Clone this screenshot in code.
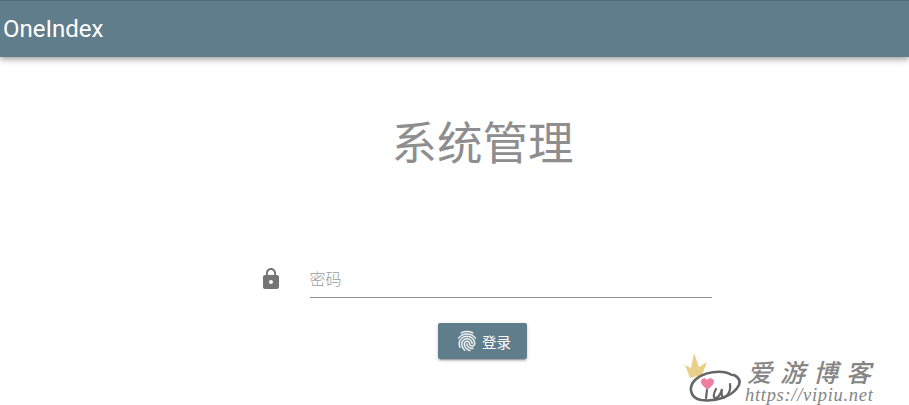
<style>
  :global(body) { margin: 0; background: #fff; overflow: hidden; }
  .page { position: relative; width: 909px; height: 405px; overflow: hidden; font-family: Roboto, "Noto Sans CJK SC", sans-serif; }
  .bar { height: 57px; background: #607d8b; border-top: 1px solid #526c79; box-sizing: border-box; display: flex; align-items: center; padding: 0 3px; color: #fff; font-size: 24px; box-shadow: 0 2px 4px -1px rgba(0,0,0,.2), 0 4px 5px 0 rgba(0,0,0,.14), 0 1px 10px 0 rgba(0,0,0,.12); }
  main { padding-left: 56px; display: flex; flex-direction: column; align-items: center; }
  h1 { margin: 51px 0 0; font-weight: 400; font-size: 45.5px; line-height: 64px; color: #8e8e8e; text-align: center; font-family: "Noto Sans CJK SC", sans-serif; }
  .field { width: 453px; margin: 89px 0 0 5px; display: flex; align-items: flex-end; gap: 27px; }
  .field svg { flex: none; margin-bottom: 7px; }
  .input { flex: 1; height: 37px; box-sizing: border-box; border-bottom: 1px solid #8f8f8f; color: #9c9c9c; font-size: 16px; line-height: 34px; font-family: "Noto Sans CJK SC", sans-serif; font-weight: 300; }
  button { margin-top: 25px; width: 89px; height: 36px; padding: 0 0 0 1px; border: 0; border-radius: 2px; background: #607d8b; color: #fff; font-size: 14.5px; font-family: "Noto Sans CJK SC", sans-serif; display: flex; align-items: center; justify-content: center; gap: 3px; box-shadow: 0 3px 1px -2px rgba(0,0,0,.2), 0 2px 2px 0 rgba(0,0,0,.14), 0 1px 5px 0 rgba(0,0,0,.12); }
  button svg { stroke: #fff; stroke-width: 0.4; }
  .mark { position: absolute; left: 684px; top: 354px; width: 225px; height: 51px; }
  .mark svg { position: absolute; left: 0; top: 0; overflow: visible; }
  .cn { position: absolute; left: 63px; top: 4px; font-family: "Noto Sans CJK SC", sans-serif; font-size: 25px; font-weight: 500; line-height: 26px; letter-spacing: 8px; color: #858585; white-space: nowrap; font-style: italic; }
  .url { position: absolute; left: 61px; top: 31px; font-family: "Liberation Serif", serif; font-style: italic; font-size: 18.5px; line-height: 20px; letter-spacing: 0.7px; color: #858585; white-space: nowrap; }
</style>

<div class="page">
  <header class="bar">OneIndex</header>
  <main>
    <h1>系统管理</h1>
    <div class="field">
      <svg width="24" height="24" viewBox="0 0 24 24" fill="#757575"><path d="M18 8h-1V6c0-2.76-2.24-5-5-5S7 3.24 7 6v2H6c-1.1 0-2 .9-2 2v10c0 1.1.9 2 2 2h12c1.1 0 2-.9 2-2V10c0-1.1-.9-2-2-2zm-6 9c-1.1 0-2-.9-2-2s.9-2 2-2 2 .9 2 2-.9 2-2 2zm3.1-9H8.9V6c0-1.71 1.39-3.1 3.1-3.1 1.71 0 3.1 1.39 3.1 3.1v2z"/></svg>
      <div class="input">密码</div>
    </div>
    <button>
      <svg width="24" height="24" viewBox="0 0 24 24" fill="#fff"><path d="M17.81 4.47c-.08 0-.16-.02-.23-.06C15.66 3.42 14 3 12.01 3c-1.98 0-3.86.47-5.57 1.41-.24.13-.54.04-.68-.2-.13-.24-.04-.55.2-.68C7.82 2.52 9.86 2 12.01 2c2.13 0 3.99.47 6.03 1.52.25.13.34.43.21.67-.09.18-.26.28-.44.28zM3.5 9.72c-.1 0-.2-.03-.29-.09-.23-.16-.28-.47-.12-.7.99-1.4 2.25-2.5 3.75-3.27C9.98 4.04 14 4.03 17.15 5.65c1.5.77 2.76 1.86 3.75 3.25.16.22.11.54-.12.7-.23.16-.54.11-.7-.12-.9-1.26-2.04-2.25-3.39-2.94-2.87-1.47-6.54-1.47-9.4.01-1.36.7-2.5 1.7-3.4 2.96-.08.14-.23.21-.39.21zm6.25 12.07c-.13 0-.26-.05-.35-.15-.87-.87-1.34-1.43-2.01-2.64-.69-1.23-1.05-2.73-1.05-4.34 0-2.97 2.54-5.39 5.66-5.39s5.66 2.42 5.66 5.39c0 .28-.22.5-.5.5s-.5-.22-.5-.5c0-2.42-2.09-4.39-4.66-4.39-2.57 0-4.66 1.97-4.66 4.39 0 1.44.32 2.77.93 3.85.64 1.15 1.08 1.64 1.85 2.42.19.2.19.51 0 .71-.11.1-.24.15-.37.15zm7.17-1.85c-1.19 0-2.24-.3-3.1-.89-1.49-1.01-2.38-2.65-2.38-4.39 0-.28.22-.5.5-.5s.5.22.5.5c0 1.41.72 2.74 1.94 3.56.71.48 1.54.71 2.54.71.24 0 .64-.03 1.04-.1.27-.05.53.13.58.41.05.27-.13.53-.41.58-.57.11-1.07.12-1.21.12zM14.91 22c-.04 0-.09-.01-.13-.02-1.59-.44-2.63-1.03-3.72-2.1-1.4-1.39-2.17-3.24-2.17-5.22 0-1.62 1.38-2.94 3.08-2.94 1.7 0 3.08 1.32 3.08 2.94 0 1.07.93 1.94 2.08 1.94s2.08-.87 2.08-1.94c0-3.77-3.25-6.83-7.25-6.83-2.84 0-5.44 1.58-6.61 4.03-.39.81-.59 1.76-.59 2.8 0 .78.07 2.01.67 3.61.1.26-.03.55-.29.64-.26.1-.55-.04-.64-.29-.49-1.31-.73-2.61-.73-3.96 0-1.2.23-2.29.68-3.24 1.33-2.79 4.28-4.6 7.51-4.6 4.55 0 8.25 3.51 8.25 7.83 0 1.62-1.38 2.94-3.08 2.94s-3.08-1.32-3.08-2.94c0-1.07-.93-1.94-2.08-1.94s-2.08.87-2.08 1.94c0 1.71.66 3.31 1.87 4.51.95.94 1.86 1.46 3.27 1.85.27.07.42.35.35.61-.05.23-.26.38-.47.38z"/></svg>
      <span>登录</span>
    </button>
  </main>
  <div class="mark">
    <svg width="62" height="51" viewBox="0 0 62 51">
      <path d="M1 11 L7 14 L10 -1 L15 13 L23 8 L18 21 L6 24 Z" fill="#e9cf8a"/>
      <path d="M23 26c2-3 7-2 7 2 0 3-4 5-6.500 8-2.500-3-6.500-5-6.500-8 0-4 4-5 6-2z" fill="#ef7f9f"/>
      <path d="M48 21 C38 15 19 18 11 26 C4 33 6 44 17 46 C31 48 49 43 55 31 C57 26 54 23 50 21" fill="none" stroke="#666" stroke-width="2.6" stroke-linecap="round"/>
      <path d="M23 36 L22 44 M32 35 C29 40 29 45 32 44 C35 43 37 39 38 35 C37 40 38 45 41 43 C45 41 47 35 46 30" fill="none" stroke="#666" stroke-width="2.2" stroke-linecap="round"/>
    </svg>
    <div class="cn">爱游博客</div>
    <div class="url">https://vipiu.net</div>
  </div>
</div>
